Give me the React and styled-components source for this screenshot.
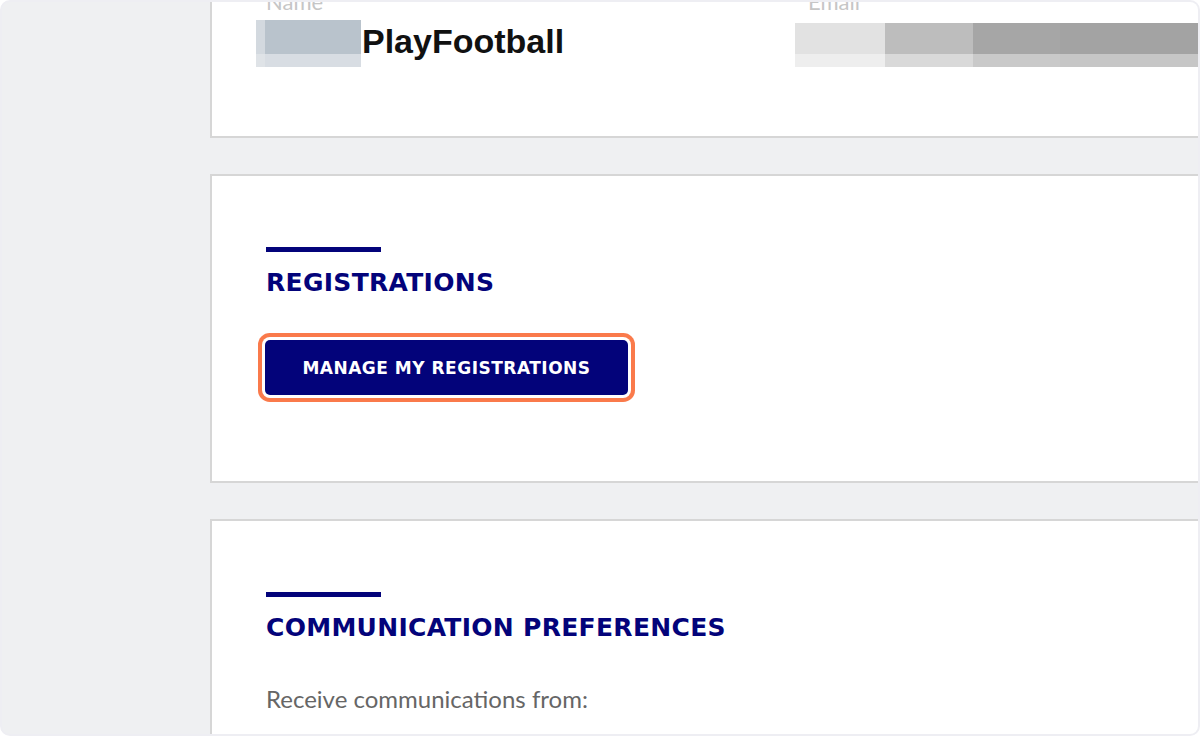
import React from 'react';
import styled, { createGlobalStyle } from 'styled-components';

const GlobalStyle = createGlobalStyle`
  html, body {
    margin: 0;
    padding: 0;
    background: #ffffff;
  }
  * {
    box-sizing: border-box;
  }
`;

const NAVY = '#03037a';

const Frame = styled.div`
  width: 1200px;
  height: 736px;
  border: 2px solid #eeeef3;
  border-radius: 10px;
  overflow: hidden;
  background: #eff0f2;
  display: flex;
`;

const Main = styled.main`
  flex: 1;
  margin-left: 208px;
  margin-top: -55px;
  display: flex;
  flex-direction: column;
  gap: 36px;
`;

const Card = styled.section`
  flex-shrink: 0;
  background: #ffffff;
  border: 2px solid #d6d6d6;
  border-right: none;
  padding: ${(p) => p.$pad || '71px 0 86px 54px'};
`;

const FieldGrid = styled.div`
  display: grid;
  grid-template-columns: 542px 1fr;
`;

const Field = styled.div`
  display: flex;
  flex-direction: column;
  min-width: 0;
`;

const FieldLabel = styled.div`
  font-family: Lato, 'Noto Sans', sans-serif;
  font-size: 22px;
  line-height: 26px;
  color: #c6c6c6;
`;

const FieldValue = styled.div`
  display: flex;
  align-items: center;
  margin-top: ${(p) => p.$top}px;
  margin-left: ${(p) => p.$shift}px;
`;

const NameText = styled.span`
  font-family: 'Liberation Sans', Arial, sans-serif;
  font-weight: 700;
  font-size: 34px;
  color: #111111;
  margin-left: 1px;
  margin-bottom: 4px;
`;

const Redacted = styled.div`
  display: flex;
  flex-direction: column;
  flex-shrink: ${(p) => (p.$fill ? 1 : 0)};
  flex-grow: ${(p) => (p.$fill ? 1 : 0)};
`;

const RedactedRow = styled.div`
  display: flex;
  height: ${(p) => p.$h}px;
`;

const Cell = styled.div`
  width: ${(p) => (p.$w ? `${p.$w}px` : 'auto')};
  flex: ${(p) => (p.$w ? '0 0 auto' : '1')};
  background: ${(p) => p.$bg};
`;

const SectionBar = styled.div`
  width: 115px;
  height: 5px;
  background: ${NAVY};
`;

const SectionTitle = styled.h2`
  margin: 16px 0 0;
  font-family: 'DejaVu Sans', Verdana, sans-serif;
  font-weight: 700;
  font-size: 25px;
  line-height: 30px;
  letter-spacing: 0.3px;
  color: ${NAVY};
  text-transform: uppercase;
`;

const PrimaryButton = styled.button`
  display: inline-flex;
  align-items: center;
  justify-content: center;
  width: 363px;
  height: 55px;
  margin: 42px 0 0 -1px;
  padding: 0;
  border: none;
  border-radius: 5px;
  background: ${NAVY};
  color: #ffffff;
  font-family: 'DejaVu Sans', Verdana, sans-serif;
  font-weight: 700;
  font-size: 17px;
  letter-spacing: 0.5px;
  cursor: pointer;
  box-shadow: ${(p) => (p.$highlight ? '0 0 0 3px #ffffff, 0 0 0 7px #fa7a4b' : 'none')};
`;

const BodyText = styled.p`
  margin: 41px 0 0;
  font-family: Lato, 'Noto Sans', sans-serif;
  font-size: 24px;
  line-height: 30px;
  color: #666666;
`;

const nameBlock = [
  { h: 34, cells: [{ w: 9, bg: '#d3d9df' }, { w: 96, bg: '#b9c3cc' }] },
  { h: 13, cells: [{ w: 9, bg: '#dfe3e7' }, { w: 96, bg: '#d8dde3' }] },
];

const emailBlock = [
  {
    h: 31,
    cells: [
      { w: 90, bg: '#e2e2e2' },
      { w: 88, bg: '#bdbdbd' },
      { w: 87, bg: '#a6a6a6' },
      { bg: '#a3a3a3' },
    ],
  },
  {
    h: 13,
    cells: [
      { w: 90, bg: '#eeeeee' },
      { w: 88, bg: '#d9d9d9' },
      { w: 87, bg: '#c9c9c9' },
      { bg: '#c6c6c6' },
    ],
  },
];

const Pixelated = ({ rows, fill }) => (
  <Redacted $fill={fill}>
    {rows.map((row, i) => (
      <RedactedRow key={i} $h={row.h}>
        {row.cells.map((c, j) => (
          <Cell key={j} $w={c.w} $bg={c.bg} />
        ))}
      </RedactedRow>
    ))}
  </Redacted>
);

const App = () => {
  return (
    <>
      <GlobalStyle />
      <Frame>
        <Main>
          <Card $pad="40px 0 69px 54px">
            <FieldGrid>
              <Field>
                <FieldLabel>Name</FieldLabel>
                <FieldValue $top={5} $shift={-10}>
                  <Pixelated rows={nameBlock} />
                  <NameText>PlayFootball</NameText>
                </FieldValue>
              </Field>
              <Field>
                <FieldLabel>Email</FieldLabel>
                <FieldValue $top={8} $shift={-13}>
                  <Pixelated rows={emailBlock} fill />
                </FieldValue>
              </Field>
            </FieldGrid>
          </Card>

          <Card>
            <SectionBar />
            <SectionTitle>Registrations</SectionTitle>
            <PrimaryButton $highlight>MANAGE MY REGISTRATIONS</PrimaryButton>
          </Card>

          <Card $pad="71px 0 40px 54px">
            <SectionBar />
            <SectionTitle>Communication Preferences</SectionTitle>
            <BodyText>Receive communications from:</BodyText>
          </Card>
        </Main>
      </Frame>
    </>
  );
};

export default App;
